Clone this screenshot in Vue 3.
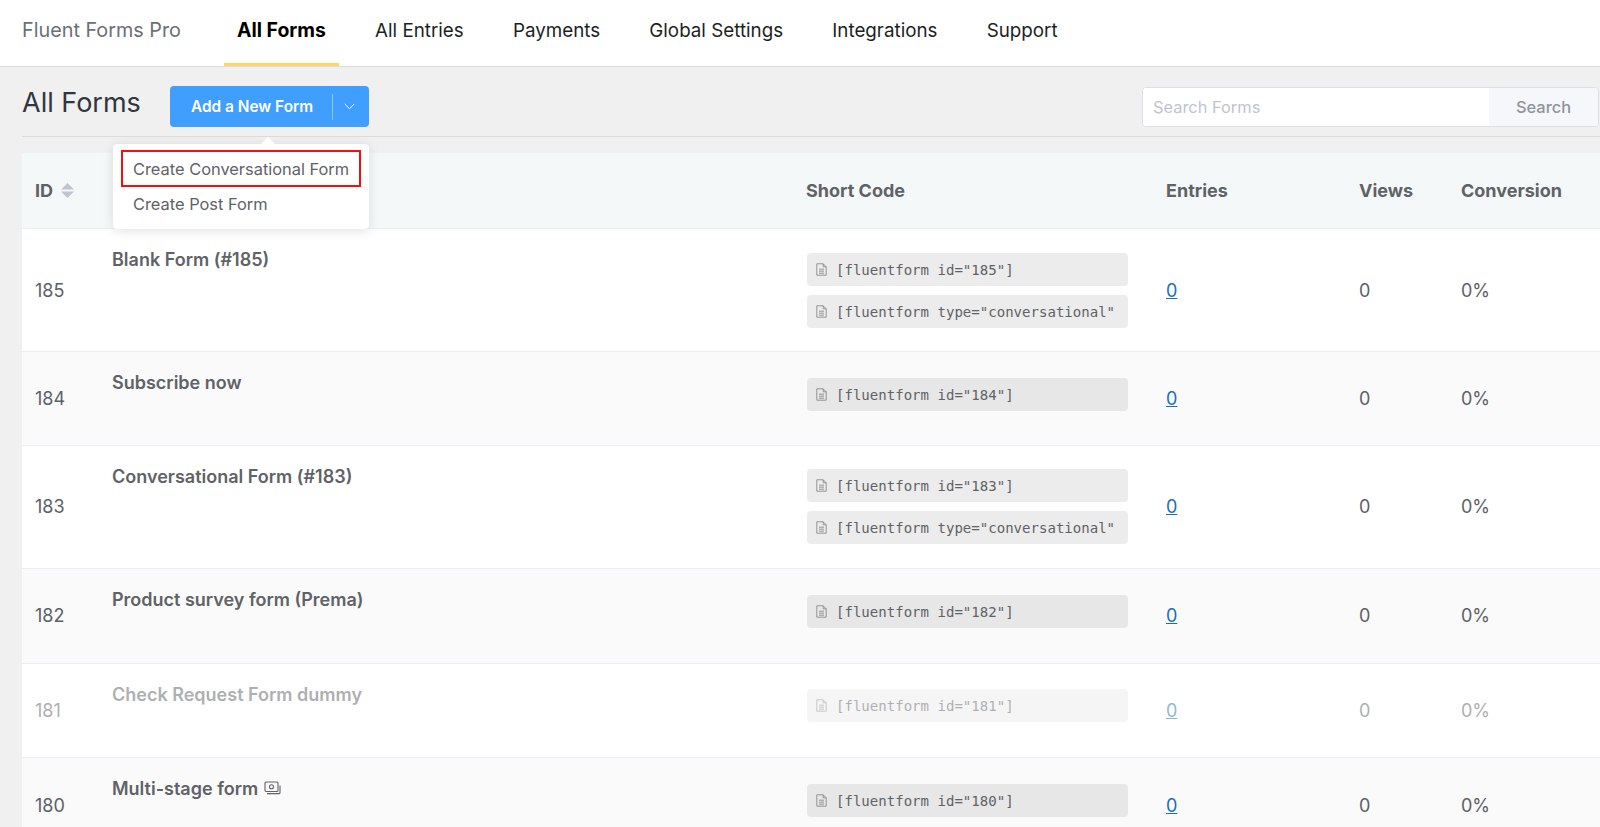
<script setup>
const navItems = ['All Forms', 'All Entries', 'Payments', 'Global Settings', 'Integrations', 'Support']
const forms = [
  { id: 185, title: 'Blank Form (#185)', codes: ['[fluentform id="185"]', '[fluentform type="conversational"'], cls: 'tall' },
  { id: 184, title: 'Subscribe now', codes: ['[fluentform id="184"]'], cls: 'short alt' },
  { id: 183, title: 'Conversational Form (#183)', codes: ['[fluentform id="183"]', '[fluentform type="conversational"'], cls: 'tall' },
  { id: 182, title: 'Product survey form (Prema)', codes: ['[fluentform id="182"]'], cls: 'short roomy alt' },
  { id: 181, title: 'Check Request Form dummy', codes: ['[fluentform id="181"]'], cls: 'short roomy faded' },
  { id: 180, title: 'Multi-stage form', codes: ['[fluentform id="180"]'], cls: 'short roomy alt', stage: true }
]
</script>

<template>
  <div class="page">
    <nav class="topbar">
      <span class="brand">Fluent Forms Pro</span>
      <a v-for="(item, i) in navItems" :key="item" class="nav-link" :class="{ active: i === 0 }">{{ item }}</a>
    </nav>

    <main class="content">
      <header class="head">
        <h1 class="title">All Forms</h1>
        <div class="add-wrap">
          <button class="add-btn">
            <span class="add-label">Add a New Form</span>
            <span class="add-sep"></span>
            <svg class="chev" width="11" height="7" viewBox="0 0 11 7"><path d="M.8 1 5.5 5.7 10.2 1" fill="none" stroke="#fff" stroke-width="1"/></svg>
          </button>
          <div class="menu">
            <span class="arrow"></span>
            <div class="menu-item boxed">Create Conversational Form</div>
            <div class="menu-item">Create Post Form</div>
          </div>
        </div>
        <div class="search">
          <input class="search-input" placeholder="Search Forms" />
          <span class="search-btn">Search</span>
        </div>
      </header>

      <section class="table">
        <div class="row th">
          <div class="c-id">ID
            <svg class="sort" width="13" height="17" viewBox="0 0 13 17"><path d="M6.5 1 13 7.5H0zM0 9.5h13L6.5 16z" fill="#c0c4cc"/></svg>
          </div>
          <div></div>
          <div>Short Code</div>
          <div>Entries</div>
          <div>Views</div>
          <div>Conversion</div>
        </div>
        <div v-for="f in forms" :key="f.id" class="row tr" :class="f.cls">
          <div class="c-id">{{ f.id }}</div>
          <div class="c-title">
            {{ f.title }}
            <svg v-if="f.stage" class="stage" width="17" height="15" viewBox="0 0 17 15" fill="none" stroke="#606266" stroke-width="1.1"><rect x="1" y="1" width="13" height="9.5" rx="1"/><circle cx="7.5" cy="5.7" r="2"/><path d="M3 12.6h12.2a.8.8 0 0 0 .8-.8V4.5"/></svg>
          </div>
          <div class="c-code">
            <div v-for="c in f.codes" :key="c" class="code">
              <svg class="doc" width="11" height="13" viewBox="0 0 11 13" fill="none" stroke="#8a8a8a" stroke-width=".9"><path d="M.8.8h6.4l3 3v8.4H.8zM7.2.8v3h3M3 6.2h5M3 8.2h5M3 10.2h5"/></svg>
              <span class="code-text">{{ c }}</span>
            </div>
          </div>
          <div class="c-num"><a class="entries">0</a></div>
          <div class="c-num">0</div>
          <div class="c-num">0%</div>
        </div>
      </section>
    </main>
  </div>
</template>

<style>
html, body { margin: 0; background: #f0f0f0; overflow: hidden; }
</style>

<style scoped>
.page {
  height: 827px;
  overflow: hidden;
  font-family: Inter, "Liberation Sans", sans-serif;
  background: #f0f0f0;
  color: #606266;
}
.topbar {
  display: flex;
  align-items: stretch;
  height: 66px;
  background: #fff;
  border-bottom: 1px solid #dcdcdc;
  box-sizing: content-box;
  padding-left: 22px;
}
.brand {
  display: flex;
  align-items: center;
  width: 202px;
  padding-bottom: 6px;
  box-sizing: border-box;
  font-size: 19.8px;
  color: #6b6f76;
  white-space: nowrap;
}
.nav-link {
  display: flex;
  align-items: center;
  padding: 0 13px 3px;
  margin-right: 23.2px;
  font-size: 18.8px;
  color: #1c1f23;
  border-bottom: 3px solid transparent;
  box-sizing: border-box;
  white-space: nowrap;
}
.nav-link.active {
  font-size: 19.4px;
  font-weight: 700;
  color: #000;
  border-bottom-color: #ffd666;
}
.content { padding-left: 22px; }
.head {
  display: flex;
  align-items: center;
  height: 70px;
  padding-top: 10px;
  box-sizing: border-box;
  border-bottom: 1px solid #dcdcdc;
}
.title {
  margin: 0 0 9px;
  width: 148px;
  font-size: 27px;
  font-weight: 400;
  color: #2f3640;
  white-space: nowrap;
}
.add-wrap { position: relative; }
.add-btn {
  display: flex;
  align-items: center;
  width: 199px;
  height: 41px;
  padding: 0 0 0 21px;
  border: 0;
  border-radius: 4px;
  background: #409eff;
  color: #fff;
  font: 600 15.4px Inter, sans-serif;
}
.add-label { width: 141px; text-align: left; white-space: nowrap; }
.add-sep { width: 1px; height: 26px; background: #8cc5ff; }
.chev { margin-left: 11px; }
.menu {
  position: absolute;
  z-index: 5;
  top: 58px;
  left: -57px;
  width: 256px;
  height: 85px;
  padding: 6px 8px;
  box-sizing: border-box;
  background: #fff;
  border-radius: 4px;
  box-shadow: 0 2px 12px rgba(0, 0, 0, .12);
}
.arrow {
  position: absolute;
  top: -5px;
  left: 150px;
  width: 10px;
  height: 10px;
  background: #fff;
  transform: rotate(45deg);
}
.menu-item {
  position: relative;
  height: 35px;
  line-height: 35px;
  padding-left: 12px;
  font-size: 16.4px;
  color: #606266;
  white-space: nowrap;
}
.menu-item.boxed {
  outline: 2px solid #f01010;
  outline-offset: -2px;
  height: 37px;
  line-height: 39px;
}
.search {
  display: flex;
  margin-left: auto;
  width: 457px;
  height: 40px;
  box-sizing: border-box;
  margin-right: 1px;
  border: 1px solid #dcdfe6;
  border-radius: 4px;
  overflow: hidden;
  background: #fff;
}
.search-input {
  flex: 1;
  min-width: 0;
  border: 0;
  outline: 0;
  padding: 0 10px;
  font: 400 16.4px Inter, sans-serif;
}
.search-input::placeholder { color: #c0c4cc; }
.search-btn {
  display: flex;
  align-items: center;
  justify-content: center;
  width: 109px;
  background: #f5f7fa;
  color: #909399;
  font-size: 16.4px;
  font-weight: 500;
}
.table { margin-top: 16px; }
.row {
  display: grid;
  grid-template-columns: 90px 694px 360px 193px 102px 139px;
  background: #fff;
  border-bottom: 1px solid #ebeef5;
  box-sizing: border-box;
  align-items: center;
  font-size: 18px;
}
.th {
  height: 76px;
  background: #f5f8f9;
  font-weight: 700;
  color: #5f6266;
  white-space: nowrap;
  padding-bottom: 1px;
}
.tr { color: #5c6066; }
.c-id { padding-left: 13px; display: flex; align-items: center; gap: 8px; }
.tall { height: 123.3px; }
.short { height: 93.5px; }
.roomy { height: 94.6px; }
.alt { background: #fafafa; }
.faded > * { opacity: .5; }
.c-title {
  align-self: start;
  padding-top: 20px;
  font-weight: 600;
  display: flex;
  align-items: center;
  gap: 6px;
  color: #5f6266;
  white-space: nowrap;
}
.c-code { display: flex; flex-direction: column; gap: 9px; }
.short .c-code { padding-bottom: 9px; }
.code {
  display: flex;
  align-items: center;
  gap: 9px;
  width: 321px;
  height: 33px;
  margin-left: 1px;
  box-sizing: border-box;
  padding-left: 9px;
  overflow: hidden;
  white-space: nowrap;
  border-radius: 4px;
  background: #ececec;
  font: 14.05px "DejaVu Sans Mono", monospace;
  color: #606266;
}
.code-text { padding-top: 1px; }
.alt .code { background: #e7e7e7; }
.doc { flex: none; }
.entries { color: #1a6fb5; text-decoration: underline; }
</style>
